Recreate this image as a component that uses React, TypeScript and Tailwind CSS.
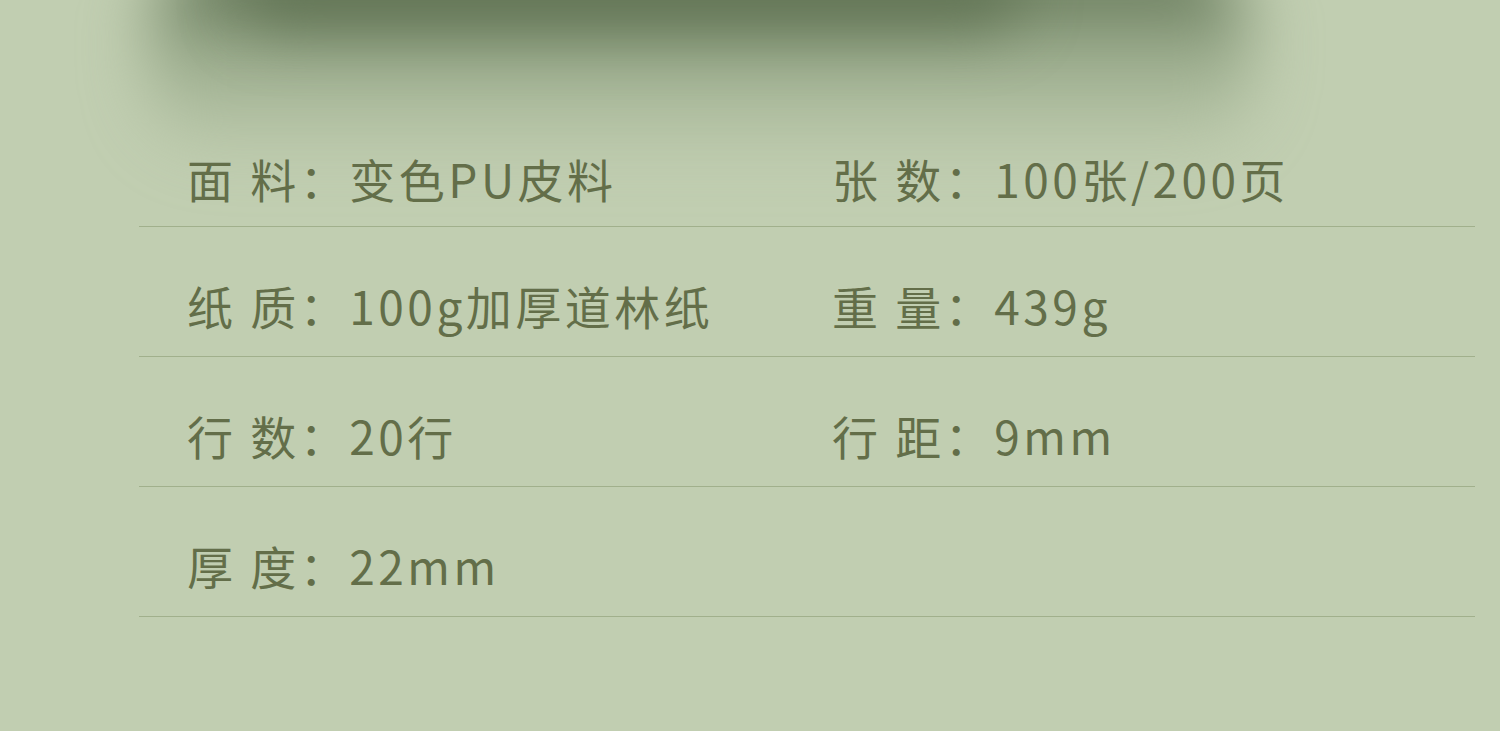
const specs: [string, string][][] = [
  [['面 料：', '变色PU皮料'], ['张 数：', '100张/200页']],
  [['纸 质：', '100g加厚道林纸'], ['重 量：', '439g']],
  [['行 数：', '20行'], ['行 距：', '9mm']],
  [['厚 度：', '22mm']],
]

export default function App() {
  return (
    <div
      className="relative w-[1500px] h-[731px] overflow-hidden bg-[#c1ceb1]"
      style={{ fontFamily: '"Noto Sans CJK SC", "Noto Sans", sans-serif' }}
    >
      {/* shadow cast by the notebook above */}
      <div className="absolute left-[150px] top-[-50px] w-[1100px] h-[210px] rounded-[80px] bg-gradient-to-b from-[#4f6244] via-[#98a98a] via-45% to-[#c1ceb1]/0 blur-[32px] pointer-events-none" />
      <div className="absolute left-[240px] top-[-50px] w-[780px] h-[80px] rounded-full bg-[#5a6c4d]/70 blur-[30px] pointer-events-none" />

      <div className="relative pt-[97px] pl-[139px] w-[1475px]">
        {specs.map((row, i) => (
          <div
            key={i}
            className={`h-[130px] border-b border-[#a1b08c] flex items-end ${i === 0 ? 'pb-[24px]' : 'pb-[27px]'}`}
          >
            {row.map(([label, value], j) => (
              <div
                key={j}
                className={`${j === 0 ? 'w-[693px] pl-[48px]' : ''} text-[46px] leading-[48px] tracking-[3.5px] text-[#636e49]`}
              >
                <span className="whitespace-pre">{label}</span>
                <span>{value}</span>
              </div>
            ))}
          </div>
        ))}
      </div>
    </div>
  )
}
